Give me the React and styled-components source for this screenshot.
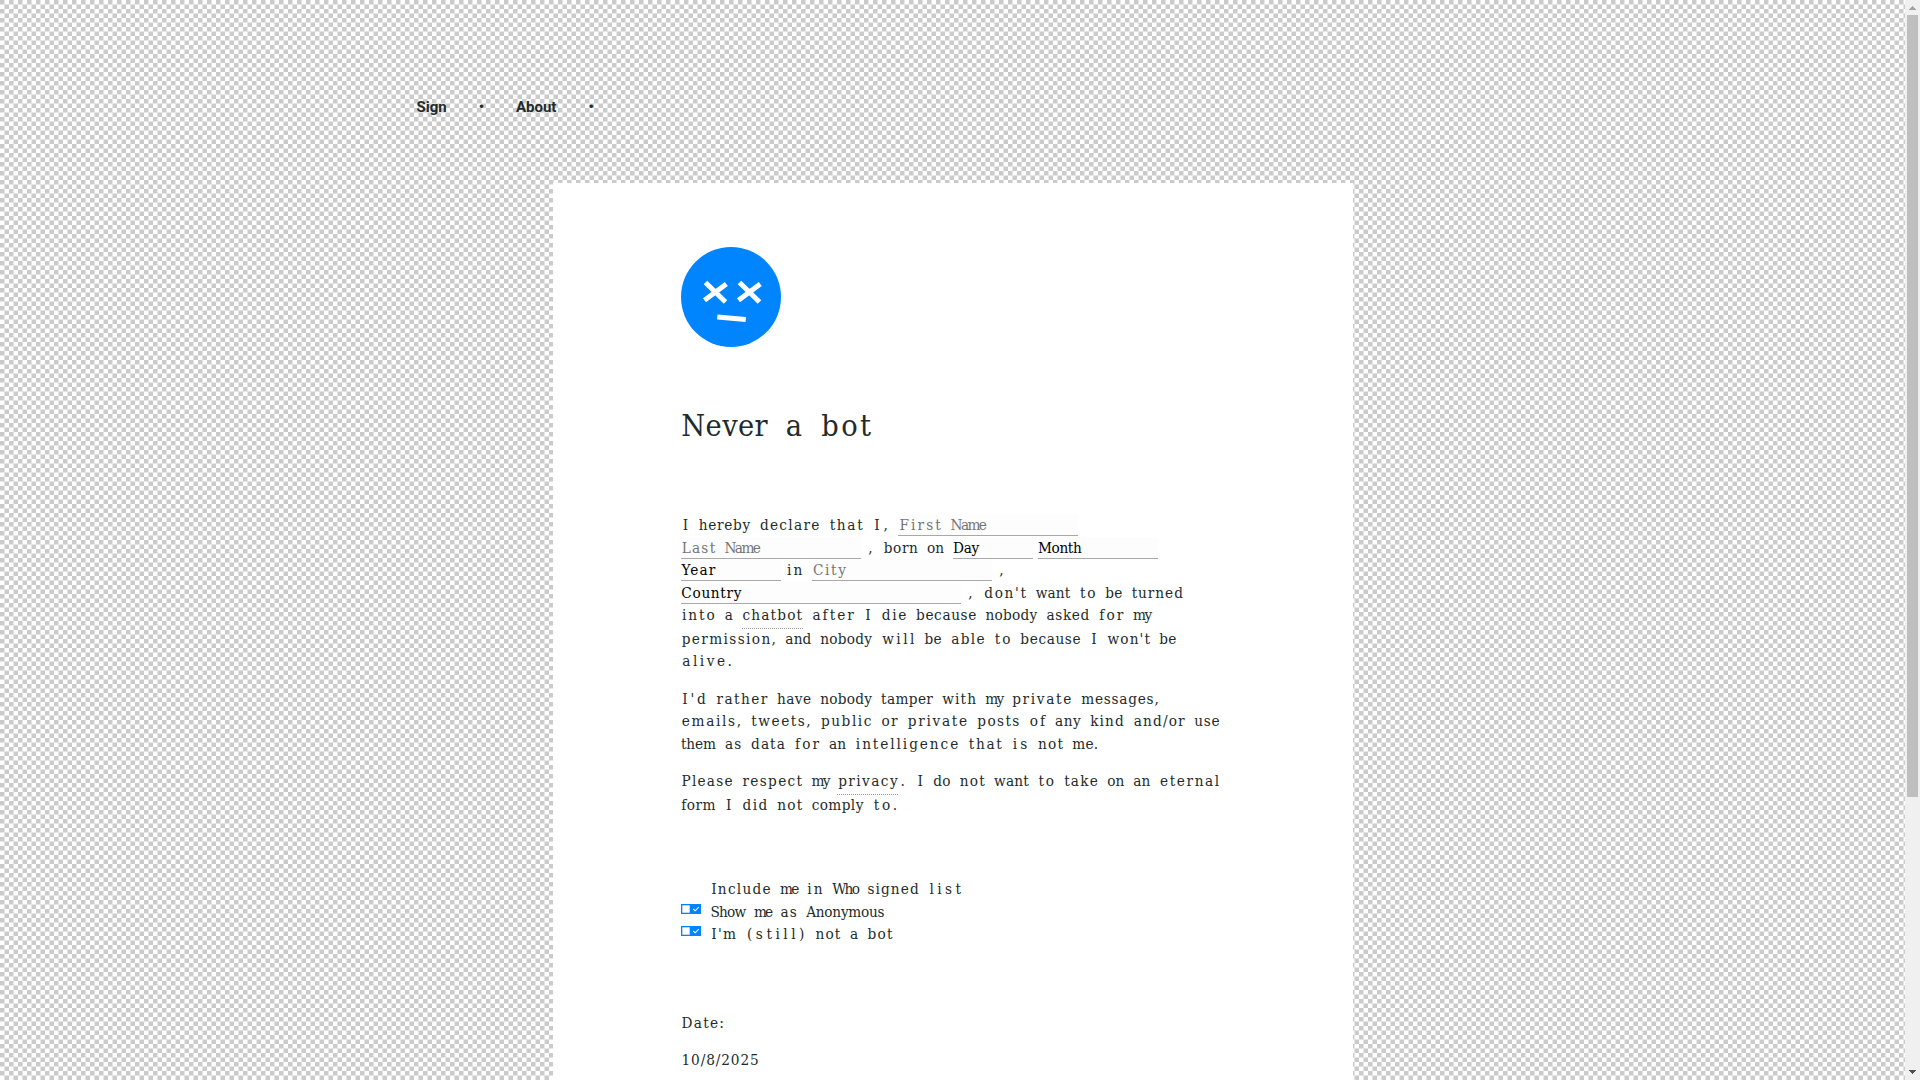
import React from "react";
import styled, { createGlobalStyle } from "styled-components";

const CELL = 8.69;
const SIZE = 15.2;
const FACE = '"DejaVu Serif Condensed", "DejaVu Serif", serif';

const GlobalStyle = createGlobalStyle`
  body {
    margin: 0;
    overflow: hidden;
    background-color: white;
  }
  * {
    box-sizing: border-box;
  }
`;

const Window = styled.div`
  display: flex;
  width: 1920px;
  height: 1080px;
  overflow: hidden;
`;

const Page = styled.div`
  width: 1905px;
  height: 1080px;
  overflow: hidden;
  color: #222b2b;
  background-color: white;
  background-size: 9px 9px;
  background-image: conic-gradient(
      from 270deg at 4px 4px,
      #cbcbcb 90deg,
      transparent 0
    ),
    conic-gradient(from 90deg at 5px 5px, #cbcbcb 90deg, transparent 0),
    linear-gradient(
      90deg,
      transparent 4px,
      #e5e5e5 4px,
      #e5e5e5 5px,
      transparent 5px
    ),
    linear-gradient(
      transparent 4px,
      #e5e5e5 4px,
      #e5e5e5 5px,
      transparent 5px
    );
`;

const Nav = styled.nav`
  display: flex;
  height: 183px;
  padding: 96px 0 0 416.6px;
  font-family: Roboto, sans-serif;
  font-size: 15px;
  font-weight: bold;
  line-height: 22px;
`;

const NavItem = styled.span`
  width: ${(props) => props.$width}px;
`;

const Dot = styled.span`
  width: 37.3px;
`;

const Card = styled.main`
  width: 800px;
  height: 1200px;
  margin-left: 553px;
  padding: 64px 100px 0 128px;
  background-color: white;
  font-family: ${FACE};
  font-size: ${SIZE}px;
  line-height: 22px;
  white-space: nowrap;
`;

const Face = styled.svg`
  display: block;
  width: 100px;
  height: 100px;
`;

const Title = styled.h1`
  height: 40px;
  margin: 59px 0 68px;
  font-size: ${SIZE * 2}px;
  font-weight: normal;
  line-height: 40px;
`;

const Paragraph = styled.div`
  margin-bottom: ${(props) => props.$gap || 0}px;
`;

const Line = styled.div`
  display: flex;
  height: ${(props) => props.$height || 22}px;
  white-space: pre;
`;

const Field = styled.span`
  width: ${(props) => props.$width}px;
  height: 22px;
  margin-right: 5px;
  color: ${(props) => (props.$select ? "black" : "#757575")};
  background-color: #fdfdfd;
  border-bottom: 1px solid #a9a9a9;
`;

const Hint = styled.span`
  height: 25px;
  border-bottom: 1px dotted #999;
`;

const Toggle = styled.svg`
  width: 20px;
  height: 10px;
  margin: 3px 9.5px 0 0;
`;

const Blank = styled.span`
  width: 29.5px;
`;

const Scrollbar = styled.div`
  display: flex;
  flex-direction: column;
  align-items: center;
  width: 15px;
  height: 1080px;
  background-color: #f0f0f0;
`;

const Thumb = styled.div`
  width: 11px;
  height: 782px;
  margin-bottom: auto;
  background-color: #bfbfbf;
`;

const Arrow = styled.svg`
  display: block;
  width: 15px;
  height: 15px;
`;

const context = document.createElement("canvas").getContext("2d");

// spreads each word over a whole number of typewriter cells
const Typed = ({ children, scale = 1 }) => {
  context.font = `${SIZE * scale}px ${FACE}`;

  return (
    <span>
      {children.split(/( +)/).map((word, i) => {
        if (!word) return null;
        const width = context.measureText(word).width,
          spacing = CELL * scale - width / word.length,
          shift = Math.max(spacing / 2, 0);

        return (
          <span
            key={i}
            style={{
              letterSpacing: spacing,
              marginLeft: shift,
              marginRight: -shift,
            }}
          >
            {word}
          </span>
        );
      })}
    </span>
  );
};

const Switch = () => (
  <Toggle viewBox="0 0 20 10">
    <path fill="#0085ff" d="M0 0h20v10H0z" />
    <path fill="white" d="M1.3 1.3h7.4v7.4H1.3z" />
    <path fill="none" stroke="white" strokeWidth="1.1" d="M12.2 5l2 1.8 3.5-3.6" />
  </Toggle>
);

class App extends React.Component {
  render() {
    return (
      <Window>
        <GlobalStyle />
        <Page>
          <Nav>
            <NavItem $width={62.1}>Sign</NavItem>
            <Dot>•</Dot>
            <NavItem $width={72.6}>About</NavItem>
            <Dot>•</Dot>
          </Nav>
          <Card>
            <Face viewBox="0 0 100 100">
              <circle cx="50" cy="50" r="50" fill="#0085ff" />
              <path
                fill="none"
                stroke="white"
                strokeWidth="5"
                d="M24.5 35.5l20 19.5M23.5 53.3L45.3 37M58.5 35.5l20 19.5M57.5 53.3L79.3 37M36.3 70l28.5 2.6"
              />
            </Face>
            <Title>
              <Typed scale={2}>Never a bot</Typed>
            </Title>
            <Paragraph $gap={15}>
              <Line $height={23}>
                <Typed>{"I hereby declare that I, "}</Typed>
                <Field $width={180}>
                  <Typed>First Name</Typed>
                </Field>
              </Line>
              <Line>
                <Field $width={180}>
                  <Typed>Last Name</Typed>
                </Field>
                <Typed>{", born on "}</Typed>
                <Field $select $width={80}>
                  <Typed>Day</Typed>
                </Field>
                <Field $select $width={120}>
                  <Typed>Month</Typed>
                </Field>
              </Line>
              <Line $height={23}>
                <Field $select $width={100}>
                  <Typed>Year</Typed>
                </Field>
                <Typed>{"in "}</Typed>
                <Field $width={180}>
                  <Typed>City</Typed>
                </Field>
                <Typed>,</Typed>
              </Line>
              <Line>
                <Field $select $width={280}>
                  <Typed>Country</Typed>
                </Field>
                <Typed>, don't want to be turned</Typed>
              </Line>
              <Line $height={24}>
                <Typed>{"into a "}</Typed>
                <Hint>
                  <Typed>chatbot</Typed>
                </Hint>
                <Typed>{" after I die because nobody asked for my"}</Typed>
              </Line>
              <Line>
                <Typed>
                  permission, and nobody will be able to because I won't be
                </Typed>
              </Line>
              <Line $height={23}>
                <Typed>alive.</Typed>
              </Line>
            </Paragraph>
            <Paragraph $gap={15}>
              <Line>
                <Typed>
                  I'd rather have nobody tamper with my private messages,
                </Typed>
              </Line>
              <Line $height={23}>
                <Typed>
                  emails, tweets, public or private posts of any kind and/or use
                </Typed>
              </Line>
              <Line>
                <Typed>them as data for an intelligence that is not me.</Typed>
              </Line>
            </Paragraph>
            <Paragraph $gap={62}>
              <Line $height={24}>
                <Typed>{"Please respect my "}</Typed>
                <Hint>
                  <Typed>privacy</Typed>
                </Hint>
                <Typed>. I do not want to take on an eternal</Typed>
              </Line>
              <Line>
                <Typed>form I did not comply to.</Typed>
              </Line>
            </Paragraph>
            <Paragraph $gap={67}>
              <Line $height={23}>
                <Blank />
                <Typed>Include me in Who signed list</Typed>
              </Line>
              <Line>
                <Switch />
                <Typed>Show me as Anonymous</Typed>
              </Line>
              <Line>
                <Switch />
                <Typed>I'm (still) not a bot</Typed>
              </Line>
            </Paragraph>
            <Paragraph $gap={15}>
              <Line>
                <Typed>Date:</Typed>
              </Line>
            </Paragraph>
            <Line>
              <Typed>10/8/2025</Typed>
            </Line>
          </Card>
        </Page>
        <Scrollbar>
          <Arrow viewBox="0 0 15 15">
            <path fill="#a3a3a3" d="M7 6h1v1h1v1h1v1h1v1H4V9h1V8h1V7h1z" />
          </Arrow>
          <Thumb />
          <Arrow viewBox="0 0 15 15">
            <path fill="#505050" d="M4 5h7v1h-1v1H9v1H8v1H7V8H6V7H5V6H4z" />
          </Arrow>
        </Scrollbar>
      </Window>
    );
  }
}

export default App;
